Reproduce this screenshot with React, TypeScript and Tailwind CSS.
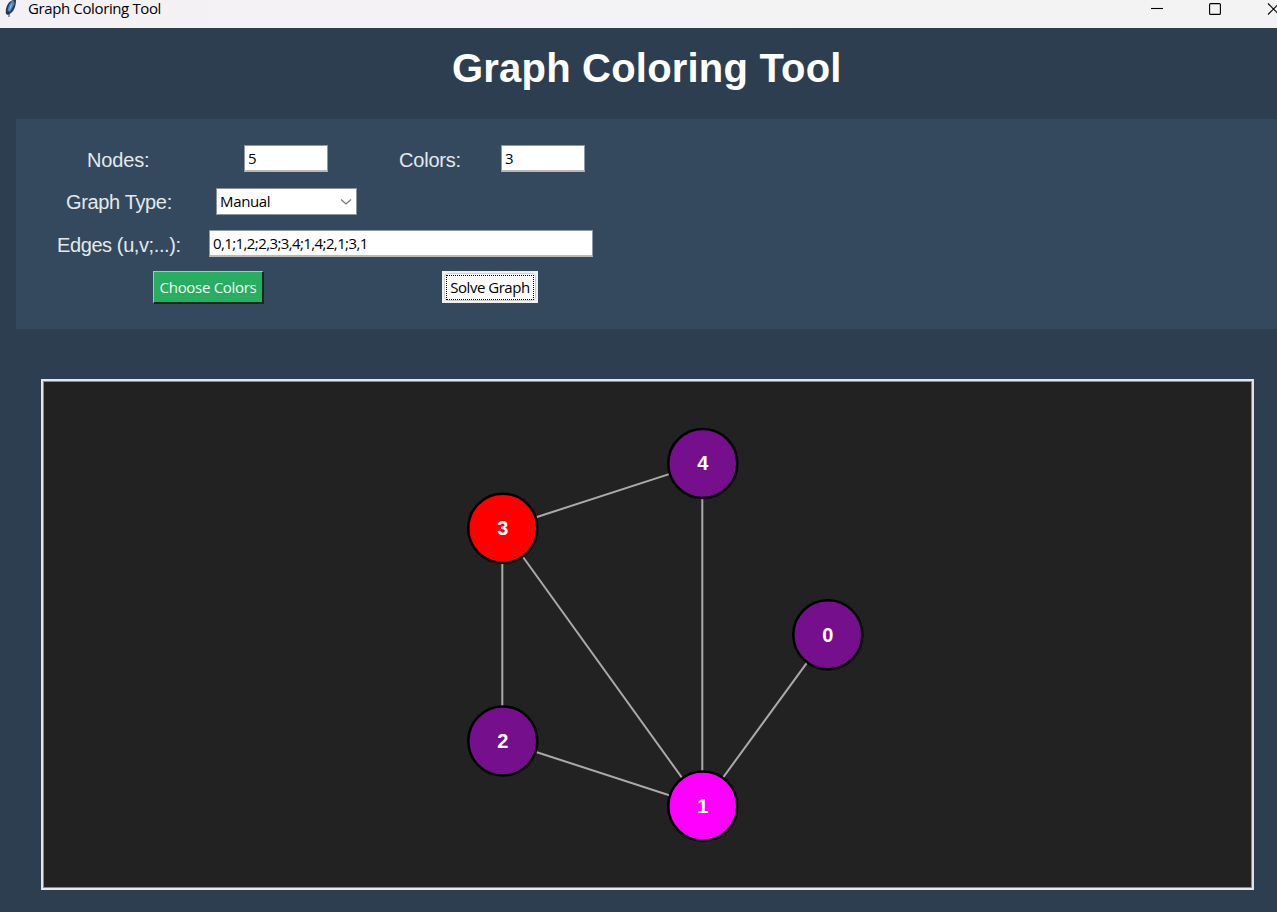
import type { ReactNode } from 'react';

type GraphNode = { id: number; x: number; y: number; fill: string };

const nodes: GraphNode[] = [
  { id: 0, x: 827.8, y: 634.8, fill: '#750f8b' },
  { id: 1, x: 702.8, y: 806, fill: '#ff00ff' },
  { id: 2, x: 502.8, y: 741, fill: '#750f8b' },
  { id: 3, x: 502.8, y: 528.2, fill: '#ff0000' },
  { id: 4, x: 702.8, y: 463.4, fill: '#750f8b' },
];

const edges: [number, number][] = [[0, 1], [1, 2], [2, 3], [3, 4], [1, 4], [3, 1]];

function TitleBar() {
  return (
    <header className="flex h-[28px] w-full shrink-0 items-start bg-linear-to-r from-[#f3f1f5] to-[#f3f3f3] text-black">
      <svg className="ml-[4px] h-[18px] w-[13px] shrink-0" viewBox="0 0 13 18">
        <path d="M2 14C1 9 3 2 9 0H12C12 4 11 10 7 13L4 15Z" fill="#29394b" />
        <path d="M3.5 11C4 6 6 2 9.5 0L10.5 4L6 12Z" fill="#4585c6" />
        <path d="M8.5 2.5L7 8L5 12L6 6Z" fill="#85b6e6" />
        <path d="M5 11V17" fill="none" stroke="#333" strokeWidth="0.9" />
      </svg>
      <span className="ml-[11px] font-['Open_Sans',sans-serif] text-[15px] leading-[16px] tracking-[-0.38px] whitespace-nowrap">
        Graph Coloring Tool
      </span>
      <svg className="ml-auto h-[18px] w-[127px] shrink-0" viewBox="0 0 127 18" fill="none" stroke="#000" strokeWidth="1.1">
        <path d="M1 8.5H13" />
        <rect x="59.6" y="3.6" width="10.8" height="10.8" rx="1" />
        <path d="M118 3.5L129 14.5M118 14.5L129 3.5" />
      </svg>
    </header>
  );
}

function Label({ children, className }: { children: ReactNode; className: string }) {
  return (
    <span className={`shrink-0 whitespace-nowrap font-['Liberation_Sans',Arial,sans-serif] text-[20px] leading-[26px] text-[#e4e9eb] ${className}`}>
      {children}
    </span>
  );
}

function Field({ value, className }: { value: string; className: string }) {
  return (
    <div className={`h-[27px] shrink-0 whitespace-nowrap border border-[#8d99a5] border-b-2 border-b-[#b9b9b9] bg-white pl-[3px] font-['Open_Sans',sans-serif] text-[15px] leading-[25px] text-black ${className}`}>
      {value}
    </div>
  );
}

function Controls() {
  return (
    <section className="ml-[16px] flex h-[210px] shrink-0 flex-col bg-[#34495e] pt-[26px]">
      <div className="flex h-[43px] items-start">
        <Label className="ml-[71px] w-[157px] pt-[2px] tracking-[-0.15px]">Nodes:</Label>
        <Field value="5" className="w-[84px]" />
        <Label className="ml-[71px] w-[102px] pt-[2px] tracking-[-0.2px]">Colors:</Label>
        <Field value="3" className="w-[84px]" />
      </div>
      <div className="flex h-[42px] items-start">
        <Label className="ml-[50px] w-[150px] pt-[1px] tracking-[-0.35px]">Graph Type:</Label>
        <div className="flex h-[27px] w-[141px] items-start justify-between border border-[#8b939b] bg-white pl-[3px] pr-[4px] font-['Open_Sans',sans-serif] text-[15px] leading-[25px] tracking-[-0.35px] text-black">
          <span>Manual</span>
          <svg className="mt-[9px] h-[8px] w-[12px]" viewBox="0 0 12 8" fill="none" stroke="#777" strokeWidth="1.3">
            <path d="M1 1.5L6 6L11 1.5" />
          </svg>
        </div>
      </div>
      <div className="flex h-[41px] items-start">
        <Label className="ml-[41px] w-[152px] pt-[2px] tracking-[-0.4px]">Edges (u,v;...):</Label>
        <Field value="0,1;1,2;2,3;3,4;1,4;2,1;3,1" className="w-[384px] tracking-[-0.6px]" />
      </div>
      <div className="flex items-start">
        <button className="ml-[137px] h-[33px] w-[111px] whitespace-nowrap border border-b-2 border-r-2 border-t-[#7fe0a5] border-r-[#102c1c] border-b-[#102c1c] border-l-[#7fe0a5] bg-[#27ae60] font-['Open_Sans',sans-serif] text-[15px] leading-[30px] text-[#f4faf6]">
          <span className="tracking-[-0.3px]">Choose Colors</span>
        </button>
        <button className="ml-[178px] flex h-[32px] w-[96px] items-center justify-center border border-[#f0f0f0] bg-[#f0f0f0]">
          <span className="flex h-[28px] w-[92px] items-center justify-center rounded-[4px] border border-[#d0d0d0] bg-[#fdfdfd]">
            <span className="h-[25px] w-[88px] whitespace-nowrap border border-dotted border-black font-['Open_Sans',sans-serif] text-[15px] leading-[23px] tracking-[-0.48px] text-black">
              Solve Graph
            </span>
          </span>
        </button>
      </div>
    </section>
  );
}

function GraphCanvas() {
  return (
    <section className="ml-[41px] mt-[50px] h-[511px] w-[1213px] shrink-0 border-2 border-b-[#e8e9ec] border-l-[#e3e6e9] border-r-[#e0e2e5] border-t-[#e3e6e9] bg-[#222222] shadow-[inset_0_0_0_1px_#8a8a8a]">
      <svg className="block h-[507px] w-[1209px]" viewBox="43 381 1209 507">
        {edges.map(([a, b]) => (
          <line key={`${a}-${b}`} x1={nodes[a].x - 0.5} y1={nodes[a].y} x2={nodes[b].x - 0.5} y2={nodes[b].y} stroke="#aaaaaa" strokeWidth="2" />
        ))}
        {nodes.map((n) => (
          <g key={n.id}>
            <circle cx={n.x} cy={n.y} r="34.5" fill={n.fill} stroke="#000" strokeWidth="2.5" />
            <text x={n.x - 0.1} y={n.y + 7} textAnchor="middle" className="fill-white font-['Liberation_Sans',Arial,sans-serif] text-[20px] font-bold">
              {n.id}
            </text>
          </g>
        ))}
      </svg>
    </section>
  );
}

export default function App() {
  return (
    <main className="flex h-[912px] w-[1277px] flex-col overflow-hidden bg-[#2d3e50]">
      <TitleBar />
      <h1 className="h-[91px] shrink-0 whitespace-nowrap pl-[452px] pt-[16px] font-['Liberation_Sans',Arial,sans-serif] text-[40px] font-bold leading-[48px] tracking-[0.2px] text-white">
        Graph Coloring Tool
      </h1>
      <Controls />
      <GraphCanvas />
    </main>
  );
}
